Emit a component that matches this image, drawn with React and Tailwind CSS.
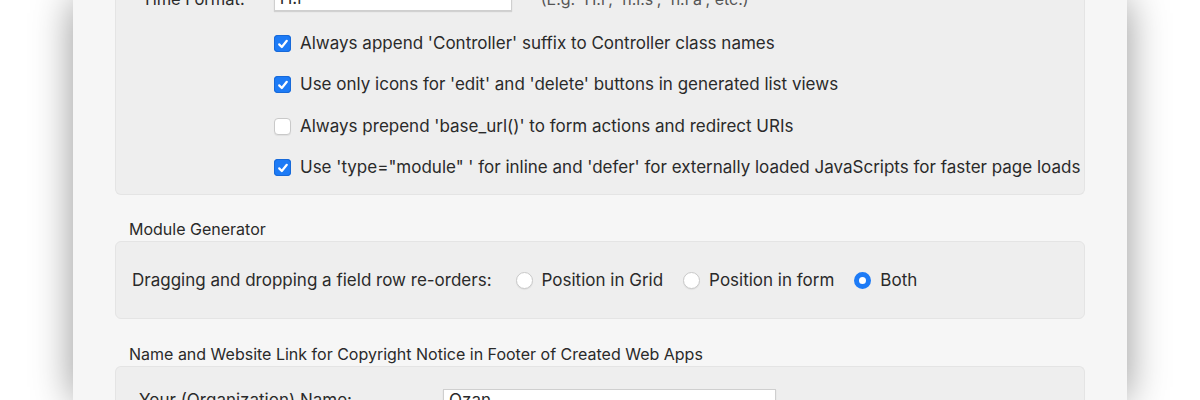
import React from 'react'

const font = { fontFamily: 'Inter, "Noto Sans", sans-serif' }

const Checkbox = ({ checked }) => (
    checked ? (
        <span className="flex h-[17px] w-[17px] shrink-0 items-center justify-center rounded-[4px] bg-[#1d7bf6] shadow-[inset_0_0_0_1px_#1769d8]">
            <svg width="12" height="12" viewBox="0 0 12 12" fill="none">
                <path d="M2.2 6.4 L4.8 9 L9.8 2.8" stroke="white" strokeWidth="2.2" strokeLinecap="round" strokeLinejoin="round" />
            </svg>
        </span>
    ) : (
        <span className="h-[17px] w-[17px] shrink-0 rounded-[4px] border border-[#c9c9c9] bg-white shadow-[0_1px_1px_rgba(0,0,0,0.06)]" />
    )
)

const Radio = ({ checked }) => (
    checked ? (
        <span className="h-[17px] w-[17px] shrink-0 rounded-full border-[5px] border-[#1d7bf6] bg-white" />
    ) : (
        <span className="h-[17px] w-[17px] shrink-0 rounded-full border border-[#c9c9c9] bg-white shadow-[0_1px_1px_rgba(0,0,0,0.06)]" />
    )
)

const options = [
    { label: "Always append 'Controller' suffix to Controller class names", checked: true },
    { label: "Use only icons for 'edit' and 'delete' buttons in generated list views", checked: true },
    { label: "Always prepend 'base_url()' to form actions and redirect URIs", checked: false },
    { label: "Use 'type=\"module\" ' for inline and 'defer' for externally loaded JavaScripts for faster page loads", checked: true },
]

const radios = [
    { label: "Position in Grid", checked: false },
    { label: "Position in form", checked: false },
    { label: "Both", checked: true },
]

export default function App() {
    return (
        <div className="h-[400px] overflow-hidden bg-white text-[17px] text-[#2a2a2a]" style={font}>
            <div className="mx-auto flex h-full w-[1054px] flex-col bg-[#f6f6f6] px-[42px] shadow-[0_0_38px_rgba(0,0,0,0.42)]">
                {/* general settings (top is scrolled out of view) */}
                <div className="-mt-[14px] shrink-0 rounded-b-[6px] border border-t-0 border-[#e4e4e4] bg-[#eeeeee] pb-[6px]">
                    <div className="flex h-[26px] items-center">
                        <span className="pl-[26px] text-[16.5px]">Time Format:</span>
                        <div className="ml-[29px] flex h-[24px] w-[238px] items-center border border-[#cfcfcf] bg-white pl-[5px] shadow-[0_1px_1px_rgba(0,0,0,0.12)]">
                            H:i
                        </div>
                        <span className="ml-[29px] text-[16px] text-[#555]">(E.g. 'H:i', 'h:i:s', 'h:i a', etc.)</span>
                    </div>
                    <div className="pl-[158px] pt-[11px]">
                        {options.map((opt) => (
                            <div key={opt.label} className="flex h-[41.33px] items-center gap-[9px]">
                                <Checkbox checked={opt.checked} />
                                <span>{opt.label}</span>
                            </div>
                        ))}
                    </div>
                </div>

                {/* module generator */}
                <div className="mt-[26px] flex h-[20px] shrink-0 items-center pb-[4px] pl-[14px] text-[16px]">Module Generator</div>
                <div className="flex h-[78px] shrink-0 items-center rounded-[6px] border border-[#e4e4e4] bg-[#eeeeee] pl-[16px]">
                    <span>Dragging and dropping a field row re-orders:</span>
                    <div className="ml-[24px] flex items-center">
                        {radios.map((r) => (
                            <label key={r.label} className="mr-[20px] flex items-center gap-[9px]">
                                <Radio checked={r.checked} />
                                <span>{r.label}</span>
                            </label>
                        ))}
                    </div>
                </div>

                {/* copyright */}
                <div className="mt-[27px] flex h-[20px] shrink-0 items-center pb-[4px] pl-[14px] text-[16px]">
                    Name and Website Link for Copyright Notice in Footer of Created Web Apps
                </div>
                <div className="h-[80px] shrink-0 rounded-t-[6px] border border-b-0 border-[#e4e4e4] bg-[#eeeeee] pt-[21px]">
                    <div className="flex items-center">
                        <span className="w-[327px] pl-[23px]">Your (Organization) Name:</span>
                        <div className="flex h-[24px] w-[333px] items-center border border-[#cfcfcf] bg-white pl-[5px] shadow-[0_1px_1px_rgba(0,0,0,0.12)]">
                            Ozan
                        </div>
                    </div>
                </div>
            </div>
        </div>
    )
}
